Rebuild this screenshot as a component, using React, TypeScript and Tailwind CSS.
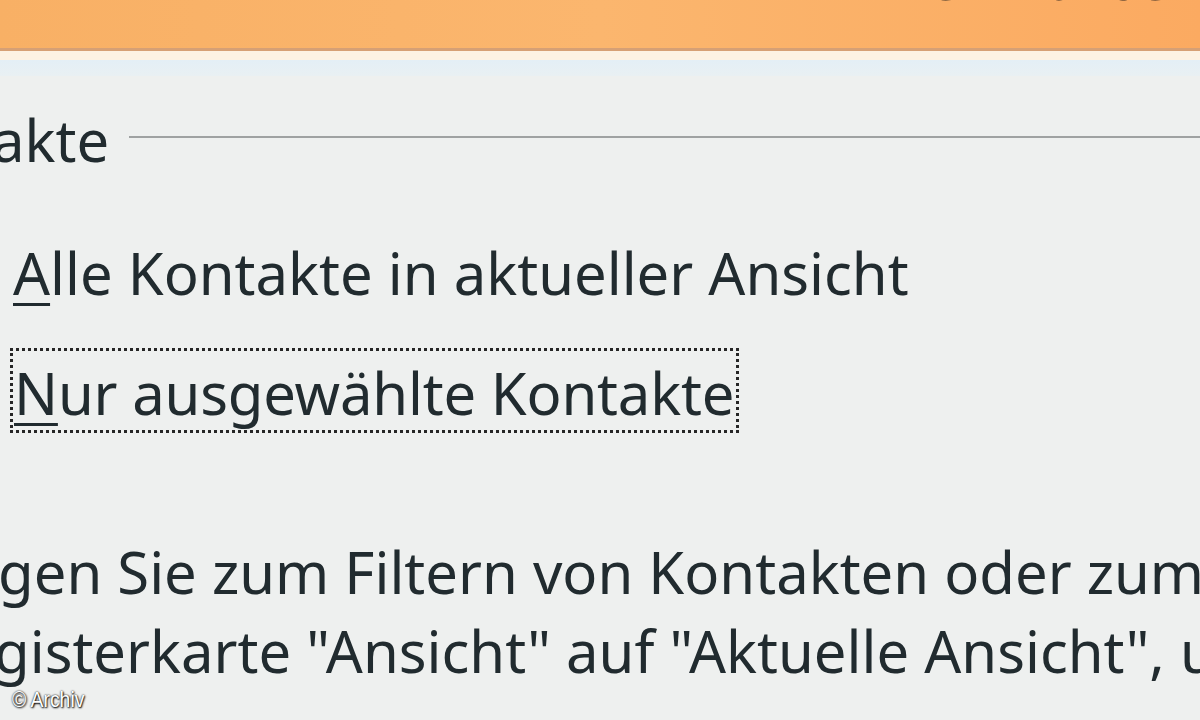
export default function App() {
  const font = { fontFamily: '"Noto Sans", "Open Sans", sans-serif' };

  return (
    <div className="w-[1200px] h-[720px] overflow-hidden bg-[#eef0ef] relative" style={font}>
      {/* orange title bar, only the foot of its caption is in view */}
      <div className="h-[51px] overflow-hidden bg-gradient-to-r from-[#f8b065] via-[#fbb66e] to-[#fbaa61] border-b-[3px] border-[#d6a075]">
        <div className="ml-[890px] mt-[-44px] text-[50px] leading-[50px] font-bold text-[#2a2420] tracking-[8px] whitespace-nowrap">
          Verwalten
        </div>
      </div>
      <div className="h-[9px] bg-[#fdf2e3]" />
      <div className="h-[16px] bg-gradient-to-b from-[#e4eff6] to-[#e9f0f3]" />

      <div className="text-[58px] text-[#212b2f]">
        {/* group legend */}
        <div className="mt-[24px] h-[80px] leading-[80px] flex items-start">
          <span className="ml-[-8px]">akte</span>
          <div className="flex-1 ml-[20px] mt-[36px] h-[2px] bg-[#9fa2a2]" />
        </div>

        {/* radio options */}
        <div className="mt-[53px] h-[80px] leading-[80px] pl-[13px]">
          <span className="underline decoration-[3px] underline-offset-[8px]">A</span>lle Kontakte in aktueller Ansicht
        </div>

        <div className="mt-[35px] ml-[10px] w-[729px] h-[85px] border-[3px] border-dotted border-[#262626] pt-[5px] pl-[1px] leading-[74px] whitespace-nowrap tracking-[-0.2px]">
          <span className="underline decoration-[3px] underline-offset-[8px]">N</span>ur ausgewählte Kontakte
        </div>

        {/* hint text */}
        <div className="mt-[99px] leading-[80px] whitespace-nowrap">
          <div className="ml-[-2px]">gen Sie zum Filtern von Kontakten oder zum</div>
          <div className="ml-[-6px] mt-[-1px]">gisterkarte "Ansicht" auf "Aktuelle Ansicht", u</div>
        </div>
      </div>

      <div
        className="absolute left-[12px] top-[683px] text-[22px] text-white origin-left scale-x-[0.88] [text-shadow:0_0_2px_#000,1px_1px_2px_#000]"
        style={{ fontFamily: '"Liberation Sans", Arial, sans-serif' }}
      >
        © Archiv
      </div>
    </div>
  );
}
